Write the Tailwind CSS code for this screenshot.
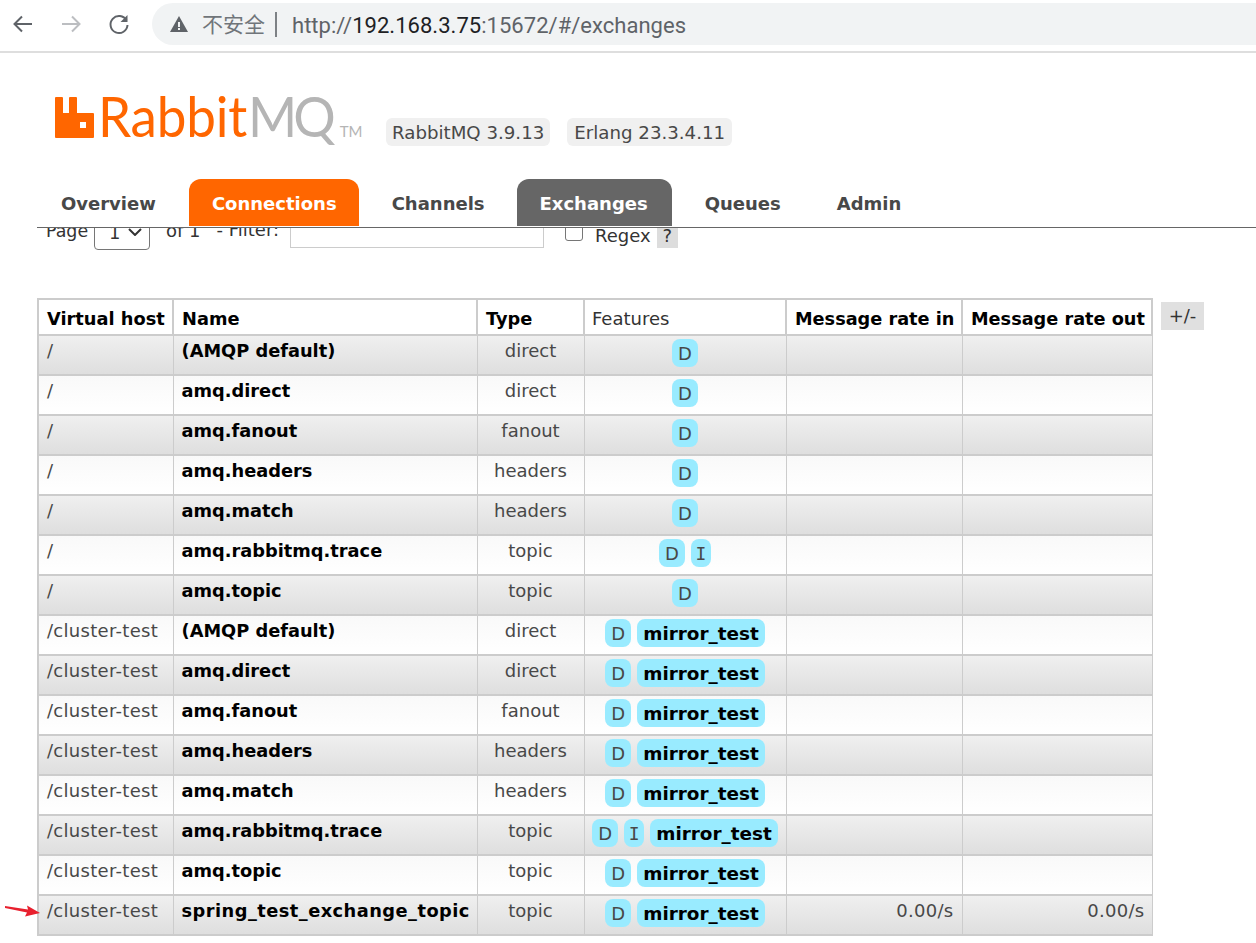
<!DOCTYPE html>
<html lang="en">
<head>
  <meta charset="UTF-8">
  <title>RabbitMQ Management</title>
  <script src="https://cdn.jsdelivr.net/npm/@tailwindcss/browser@4"></script>
</head>
<body class="bg-white h-[943px] overflow-hidden font-['DejaVu_Sans',sans-serif] text-[#484848]">

  <!-- Browser bar -->
  <div class="h-[53px] border-b-2 border-[#dedede] flex items-start pt-[3px]">
    <div class="w-[152px] h-[42px] flex items-center pl-[11px] gap-[24px] shrink-0">
      <svg class="w-6 h-6" viewBox="0 0 24 24" fill="none" stroke="#5f6368" stroke-width="2"><path d="M21 12H4M11 4.500 3.500 12l7.500 7.500"/></svg>
      <svg class="w-6 h-6" viewBox="0 0 24 24" fill="none" stroke="#bcbec1" stroke-width="2"><path d="M3 12h17M13 4.500l7.500 7.500-7.500 7.500"/></svg>
      <svg class="w-6 h-6" viewBox="0 0 24 24" fill="none" stroke="#5f6368" stroke-width="2"><path d="M19.500 8.500A8.500 8.500 0 1 0 20.500 13"/><path d="M20.500 3v7h-7z" fill="#5f6368" stroke="none"/></svg>
    </div>
    <div class="flex-1 h-[42px] bg-[#f1f3f4] rounded-l-full flex items-center pl-[17px] text-[22px] text-[#5f6368] font-['Roboto',sans-serif]">
      <svg class="w-[20px] h-[18px] mr-[13px]" viewBox="0 0 20 18" fill="#5f6368"><path d="M10 1 19 17H1z"/><path d="M9 7h2v5H9zM9 13h2v2H9z" fill="#f1f3f4"/></svg>
      <span class="font-['Noto_Sans_CJK_SC',sans-serif] text-[21px] text-[#70757a]">不安全</span>
      <span class="w-[2px] h-[25px] bg-[#7d8185] ml-[10px] mr-[15px]"></span>
      <span class="pt-[3px] tracking-[0.03px]">http://<span class="text-[#202124]">192.168.3.75</span>:15672/#/exchanges</span>
    </div>
  </div>

  <!-- Logo and versions -->
  <div class="h-[126px] pl-[55px] flex items-start relative">
    <svg class="w-[39px] h-[41px] mt-[44px] shrink-0" viewBox="0 0 39 41" fill="#f60"><path fill-rule="evenodd" d="M1 0h6a1 1 0 0 1 1 1v15h6V1a1 1 0 0 1 1-1h6a1 1 0 0 1 1 1v15h16a1 1 0 0 1 1 1v23a1 1 0 0 1-1 1H1a1 1 0 0 1-1-1V1a1 1 0 0 1 1-1zM25 25v6h6v-6z"/></svg>
    <div class="mt-[31px] ml-[4px] h-[68px] flex items-baseline font-['Lato',sans-serif] font-normal text-[53px] leading-[68px] tracking-[-0.2px] text-[#f60] scale-y-[1.06] origin-bottom">Rabbit<span class="ml-[1px] text-[#b5b5b5] tracking-[-4px]">MQ</span><span class="text-[15px] ml-[8px] text-[#b5b5b5] tracking-normal">TM</span></div>
    <div class="absolute left-[386px] top-[65px] flex gap-[17px] text-[18.2px] text-[#484848]">
      <span class="h-[28px] px-[6px] leading-[30px] bg-[#f0f0f0] rounded-[6px]">RabbitMQ 3.9.13</span>
      <span class="h-[28px] px-[7px] leading-[30px] bg-[#f0f0f0] rounded-[6px]">Erlang 23.3.4.11</span>
    </div>
  </div>

  <!-- Tabs -->
  <div class="ml-[37px] h-[49px] border-b border-[#666] flex gap-[10px] pl-px font-bold text-[18px] text-[#484848]">
    <a class="h-[47px] px-[23px] leading-[49px]">Overview</a>
    <a class="h-[47px] pl-[23px] pr-[22px] leading-[49px] bg-[#f60] text-white rounded-t-[12px]">Connections</a>
    <a class="h-[47px] pl-[23px] pr-[22px] leading-[49px]">Channels</a>
    <a class="h-[47px] pl-[23px] pr-[24px] leading-[49px] bg-[#666] text-white rounded-t-[12px]">Exchanges</a>
    <a class="h-[47px] px-[23px] leading-[49px]">Queues</a>
    <a class="h-[47px] px-[23px] leading-[49px]">Admin</a>
  </div>

  <!-- Filter row, cut off by the fixed header -->
  <div class="h-[22px] overflow-hidden flex items-start pl-[46px] text-[18px] text-[#333]">
    <span class="-mt-[7px] leading-[20px] w-[42px] text-[17.4px]">Page</span>
    <span class="-mt-[8px] ml-[6px] w-[56px] h-[30px] border border-[#767676] rounded-[4px] flex items-start justify-between pl-[14px] pr-[7px] leading-[24px]">1
      <svg class="w-[14px] h-[8px] mt-[7px]" viewBox="0 0 14 8" fill="none" stroke="#333" stroke-width="2"><path d="m1 1 6 6 6-6"/></svg>
    </span>
    <span class="-mt-[7px] ml-[16px] leading-[20px]">of 1</span>
    <span class="-mt-[8px] ml-[16px] leading-[20px]">- Filter:</span>
    <span class="-mt-[2px] ml-[11px] w-[254px] h-[22px] border border-[#ccc]"></span>
    <span class="-mt-[5px] ml-[21px] w-[18px] h-[18px] border border-[#767676] rounded-[3px]"></span>
    <span class="ml-[12px] leading-[15px]">Regex</span>
    <span class="ml-[6px] w-[21px] h-[20px] bg-[#ddd] text-center leading-[15px]">?</span>
  </div>

  <!-- Exchanges table -->
  <div class="mt-[48px] ml-[37px] flex items-start">
    <table class="table-fixed border-collapse w-[1114px] text-[18px] text-[#484848]">
      <colgroup>
        <col class="w-[135px]"><col class="w-[304px]"><col class="w-[107px]"><col class="w-[202px]"><col class="w-[176px]"><col class="w-[190px]">
      </colgroup>
      <thead>
        <tr class="h-[36px] text-black bg-white">
          <th class="border-2 border-[#ccc] text-left px-[8px] pt-[4px] font-bold whitespace-nowrap text-[17.8px]">Virtual host</th>
          <th class="border-2 border-[#ccc] text-left px-[8px] pt-[4px] font-bold text-[17.8px]">Name</th>
          <th class="border-2 border-[#ccc] text-left px-[8px] pt-[4px] font-bold text-[17.8px]">Type</th>
          <th class="border-2 border-[#ccc] text-left pl-[7px] pr-[8px] pt-[3px] font-normal text-[#333]">Features</th>
          <th class="border-2 border-[#ccc] text-left px-[8px] pt-[4px] font-bold whitespace-nowrap text-[17.7px]">Message rate in</th>
          <th class="border-2 border-[#ccc] text-left px-[8px] pt-[4px] font-bold whitespace-nowrap text-[17.7px]">Message rate out</th>
        </tr>
      </thead>
      <tbody id="rows"></tbody>
    </table>
    <span class="ml-[8px] mt-[4px] w-[43px] h-[28px] bg-[#e0e0e0] text-[#333] text-[18px] leading-[28px] text-center">+/-</span>
  </div>

  <!-- Red arrow annotation -->
  <svg class="absolute left-[5px] top-[904px] w-[36px] h-[13px]" viewBox="0 0 36 13" fill="#e8202e"><path d="M0 2 23 5.500 22 1.500l13 7.500-15 3.500 2-4L0 4z"/></svg>

  <script>
    const exchanges = [
      ["/", "(AMQP default)", "direct", ["D"]],
      ["/", "amq.direct", "direct", ["D"]],
      ["/", "amq.fanout", "fanout", ["D"]],
      ["/", "amq.headers", "headers", ["D"]],
      ["/", "amq.match", "headers", ["D"]],
      ["/", "amq.rabbitmq.trace", "topic", ["D", "I"]],
      ["/", "amq.topic", "topic", ["D"]],
      ["/cluster-test", "(AMQP default)", "direct", ["D", "mirror_test"]],
      ["/cluster-test", "amq.direct", "direct", ["D", "mirror_test"]],
      ["/cluster-test", "amq.fanout", "fanout", ["D", "mirror_test"]],
      ["/cluster-test", "amq.headers", "headers", ["D", "mirror_test"]],
      ["/cluster-test", "amq.match", "headers", ["D", "mirror_test"]],
      ["/cluster-test", "amq.rabbitmq.trace", "topic", ["D", "I", "mirror_test"]],
      ["/cluster-test", "amq.topic", "topic", ["D", "mirror_test"]],
      ["/cluster-test", "spring_test_exchange_topic", "topic", ["D", "mirror_test"], "0.00/s", "0.00/s"]
    ];

    // one pill per feature, policy name is the bold one
    function pill(f) {
      if (f === "mirror_test") {
        return `<span class="h-[28px] px-[6px] leading-[30px] bg-[#99ebff] rounded-[8px] font-bold text-black text-[18.4px]">${f}</span>`;
      }
      if (f === "I") {
        return `<span class="h-[28px] w-[20px] text-center leading-[30px] bg-[#99ebff] rounded-[8px] font-['DejaVu_Sans_Mono',monospace]">${f}</span>`;
      }
      return `<span class="h-[28px] w-[26px] text-center leading-[30px] bg-[#99ebff] rounded-[8px]">${f}</span>`;
    }

    document.getElementById("rows").innerHTML = exchanges.map((x, i) => `
      <tr class="h-[40px] ${i % 2 === 0 ? "bg-linear-to-b from-[#f0f0f0] to-[#dedede]" : "bg-linear-to-b from-[#f9f9f9] to-[#ffffff]"}">
        <td class="border-2 border-[#ccc] border-x-[1px] first:border-l-2 align-top px-[8px] pt-[3px] leading-[24px] whitespace-nowrap tracking-[0.3px]">${x[0]}</td>
        <td class="border-2 border-[#ccc] border-x-[1px] align-top px-[8px] pt-[3px] leading-[24px] font-bold text-[17.8px] text-black whitespace-nowrap ${x[1].length > 20 ? "tracking-[0.47px]" : ""}">${x[1]}</td>
        <td class="border-2 border-[#ccc] border-x-[1px] align-top text-center pt-[3px] leading-[24px]">${x[2]}</td>
        <td class="border-2 border-[#ccc] border-x-[1px] align-top pt-[3px]"><div class="flex justify-center gap-[6px]">${x[3].map(pill).join("")}</div></td>
        <td class="border-2 border-[#ccc] border-x-[1px] align-top text-right pl-[8px] pr-[8px] pt-[3px] leading-[24px] tracking-[0.3px]">${x[4] || ""}</td>
        <td class="border-2 border-[#ccc] border-x-[1px] align-top text-right pl-[8px] pr-[7px] pt-[3px] leading-[24px] tracking-[0.3px]">${x[5] || ""}</td>
      </tr>`).join("");
  </script>
</body>
</html>
